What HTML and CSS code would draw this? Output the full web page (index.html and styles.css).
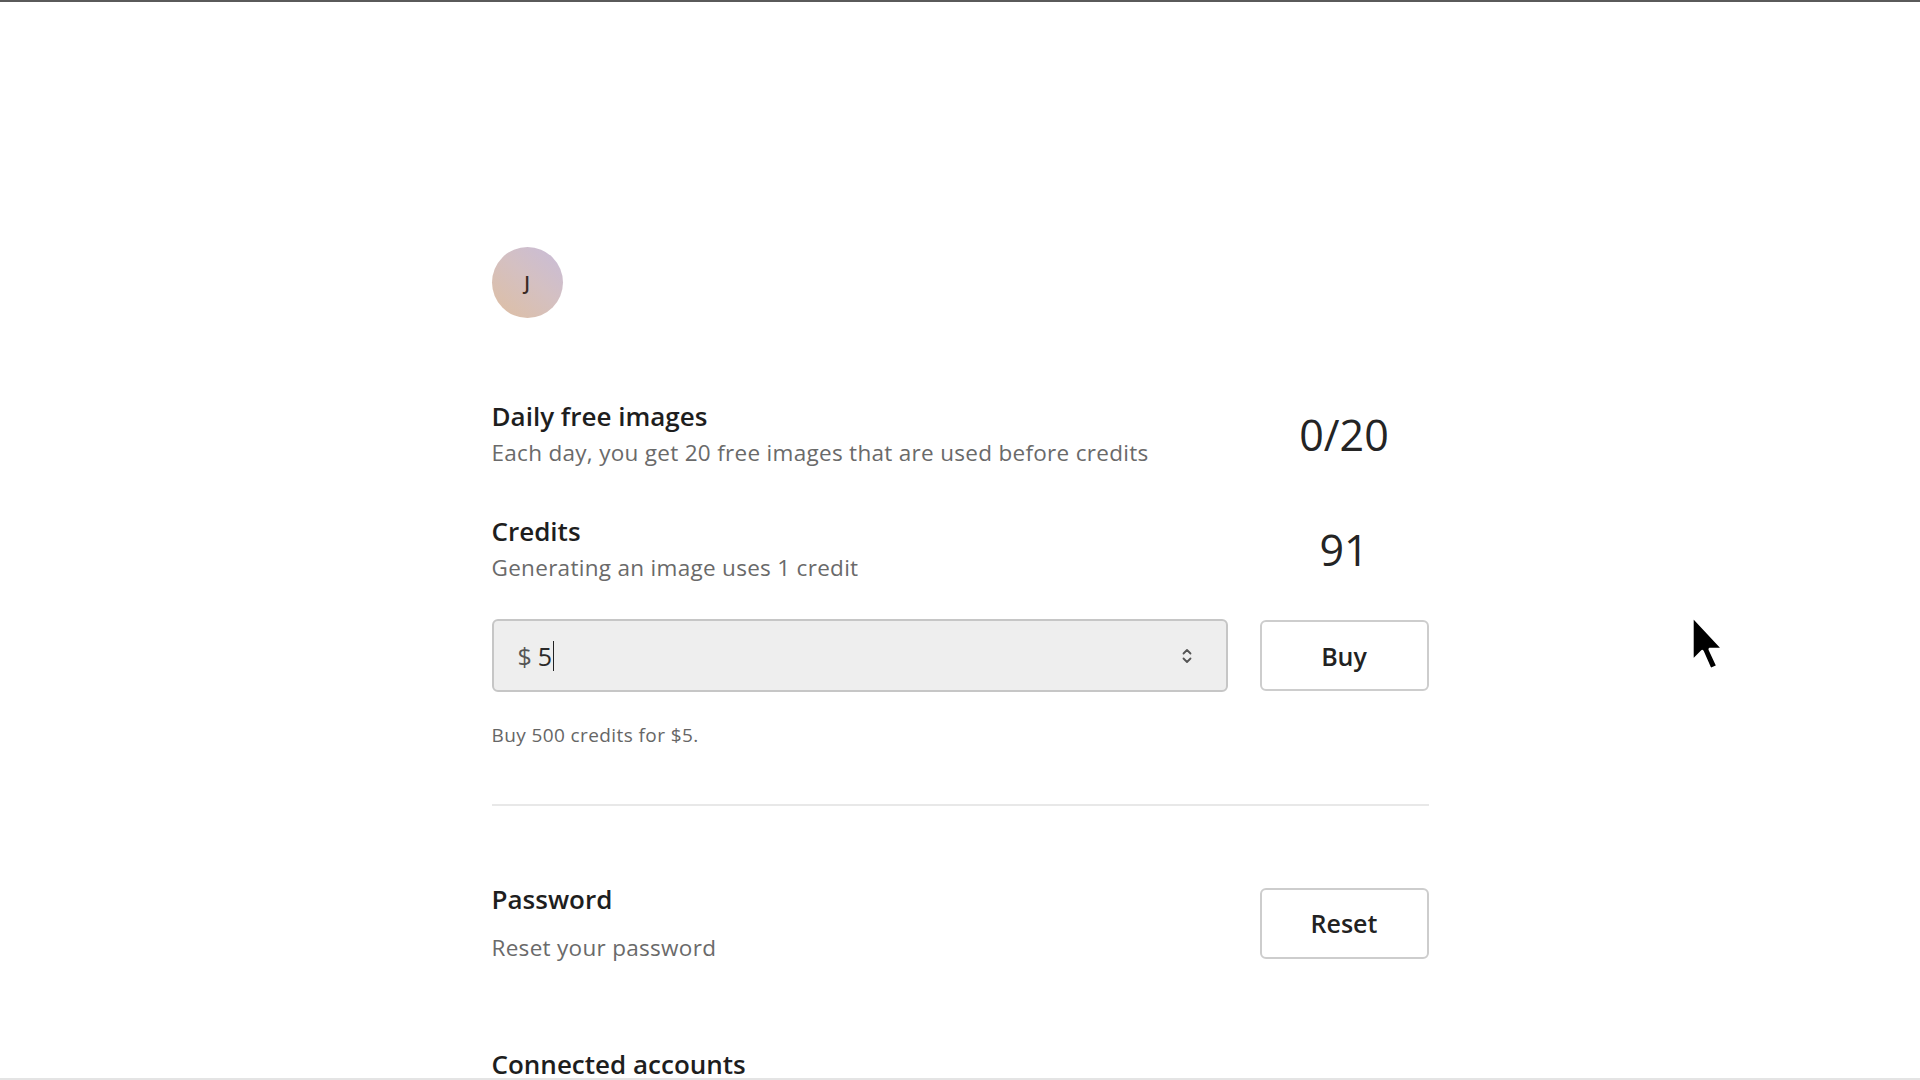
FILE: index.html
```html
<!DOCTYPE html>
<html lang="en">
<head>
  <meta charset="UTF-8">
  <meta name="viewport" content="width=device-width, initial-scale=1.0">
  <title>Account</title>
  <link rel="stylesheet" href="styles.css">
</head>
<body>
  <div class="page">
    <div class="account">
      <div class="avatar">J</div>

      <div class="row stat-row first">
        <div class="info">
          <h2>Daily free images</h2>
          <p>Each day, you get 20 free images that are used before credits</p>
        </div>
        <div class="side stat">0/20</div>
      </div>

      <div class="row stat-row">
        <div class="info">
          <h2>Credits</h2>
          <p>Generating an image uses 1 credit</p>
        </div>
        <div class="side stat">91</div>
      </div>

      <div class="row buy-row">
        <div class="amount">
          <span class="currency">$</span>
          <span class="value">5</span><span class="caret"></span>
          <svg class="spinner" width="12" height="20" viewBox="0 0 12 20">
            <path d="M2.5 7.5 L6 4 L9.5 7.5" fill="none" stroke="#555" stroke-width="1.8" stroke-linecap="round" stroke-linejoin="round"/>
            <path d="M2.5 12.5 L6 16 L9.5 12.5" fill="none" stroke="#555" stroke-width="1.8" stroke-linecap="round" stroke-linejoin="round"/>
          </svg>
        </div>
        <button class="side btn">Buy</button>
      </div>
      <p class="hint">Buy 500 credits for $5.</p>

      <hr class="divider">

      <div class="row password-row">
        <div class="info">
          <h2>Password</h2>
          <p>Reset your password</p>
        </div>
        <button class="side btn">Reset</button>
      </div>

      <h2 class="connected">Connected accounts</h2>
    </div>

    <svg class="pointer" width="46" height="68" viewBox="0 0 40 60">
      <path d="M5 3 L5 44 L14 35 L21 51 L28 48 L21 33 L33 33 Z" fill="#000" stroke="#fff" stroke-width="3" stroke-linejoin="round"/>
    </svg>
  </div>
</body>
</html>
```

FILE: styles.css
```css
* {
  margin: 0;
  padding: 0;
  box-sizing: border-box;
}

body {
  font-family: 'Open Sans', 'Lato', sans-serif;
  background: #ffffff;
  color: #222222;
}

.page {
  position: relative;
  height: 1080px;
  overflow: hidden;
  border-top: 2px solid #5a5a5a;
  border-bottom: 2px solid #e4e4e4;
}

.account {
  width: 937px;
  margin: 0 auto;
  padding-top: 245px;
}

.avatar {
  width: 71px;
  height: 71px;
  border-radius: 50%;
  background: linear-gradient(40deg, #dcbfa8 10%, #d4c0c2 55%, #c8bcd9);
  display: flex;
  align-items: center;
  justify-content: center;
  font-size: 19px;
  font-weight: 600;
  color: #3a2a24;
}

.row {
  display: flex;
  align-items: center;
  gap: 32px;
}

.info {
  flex: 1;
}

h2 {
  font-size: 26px;
  font-weight: 600;
  line-height: 32px;
  color: #1e1e1e;
}

.info p {
  font-size: 22.5px;
  line-height: 30px;
  color: #6a6a6a;
  margin-top: 6px;
  letter-spacing: 0.3px;
}

.side {
  width: 169px;
  flex-shrink: 0;
  text-align: center;
}

.stat {
  font-size: 43px;
  font-weight: 500;
  color: #242424;
}

.stat-row.first {
  margin-top: 82px;
}

.stat-row + .stat-row {
  margin-top: 47px;
}

.buy-row {
  margin-top: 36px;
}

.amount {
  flex: 1;
  height: 73px;
  background: #eeeeee;
  border: 2px solid #c6c6c6;
  border-radius: 6px;
  display: flex;
  align-items: center;
  padding: 0 33px 0 24px;
  font-size: 25px;
  color: #2a2a2a;
}

.currency {
  color: #555555;
  margin-right: 6px;
}

.caret {
  display: inline-block;
  width: 1px;
  height: 30px;
  background: #222;
  margin-left: 1px;
}

.spinner {
  margin-left: auto;
}

.btn {
  height: 71px;
  background: #ffffff;
  border: 2px solid #cdcdcd;
  border-radius: 6px;
  font-family: inherit;
  font-size: 25px;
  font-weight: 600;
  color: #222222;
}

.hint {
  margin-top: 30px;
  font-size: 19px;
  color: #666666;
  letter-spacing: 0.4px;
}

.divider {
  border: none;
  height: 2px;
  background: #e8e8e8;
  margin-top: 56px;
}

.password-row {
  margin-top: 77px;
}

.password-row .info p {
  margin-top: 18px;
}

.connected {
  margin-top: 85px;
}

.pointer {
  position: absolute;
  left: 1686px;
  top: 610px;
}
```
